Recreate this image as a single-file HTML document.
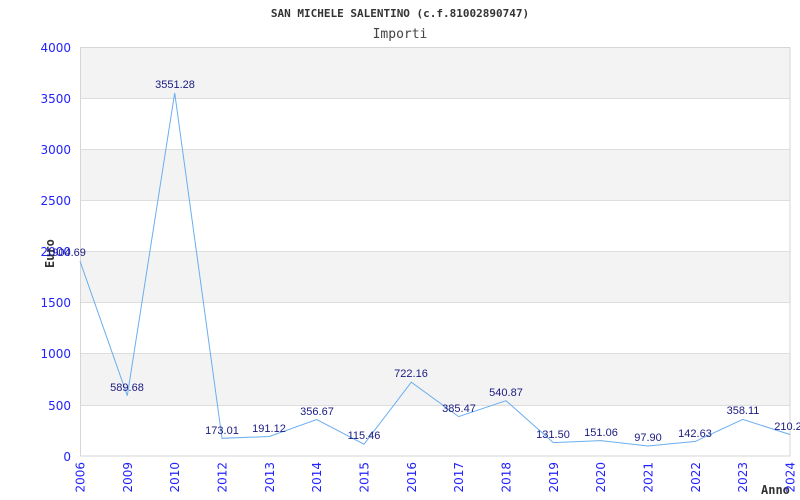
<!DOCTYPE html>
<html><head><meta charset="utf-8"><style>
html,body{margin:0;padding:0;background:#fff;width:800px;height:500px;overflow:hidden}
svg text{font-family:"DejaVu Sans","Liberation Sans",sans-serif}
svg text.v{font-family:"Liberation Sans",Arial,sans-serif}
svg text.m{font-family:"DejaVu Sans Mono","Liberation Mono",monospace}
</style></head><body>
<svg width="800" height="500" viewBox="0 0 800 500" xmlns="http://www.w3.org/2000/svg">
<rect x="80" y="47" width="710" height="51" fill="#f3f3f3"/>
<rect x="80" y="149" width="710" height="51" fill="#f3f3f3"/>
<rect x="80" y="251" width="710" height="51" fill="#f3f3f3"/>
<rect x="80" y="353" width="710" height="52" fill="#f3f3f3"/>
<g stroke="#dddddd" stroke-width="1">
<line x1="80" y1="98.5" x2="790" y2="98.5"/>
<line x1="80" y1="149.5" x2="790" y2="149.5"/>
<line x1="80" y1="200.5" x2="790" y2="200.5"/>
<line x1="80" y1="251.5" x2="790" y2="251.5"/>
<line x1="80" y1="302.5" x2="790" y2="302.5"/>
<line x1="80" y1="353.5" x2="790" y2="353.5"/>
<line x1="80" y1="405.5" x2="790" y2="405.5"/>
</g>
<rect x="80.5" y="47.5" width="709.5" height="408.5" fill="none" stroke="#d6d6d6"/>
<text class="m" x="400" y="17" text-anchor="middle" font-size="11" font-weight="bold" fill="#333">SAN MICHELE SALENTINO (c.f.81002890747)</text>
<text class="m" x="400" y="38" text-anchor="middle" font-size="13" fill="#444">Importi</text>
<g font-size="12" fill="#2222ff" text-anchor="end">
<text x="71" y="52">4000</text><text x="71" y="103">3500</text><text x="71" y="154">3000</text>
<text x="71" y="205">2500</text><text x="71" y="256">2000</text><text x="71" y="307">1500</text>
<text x="71" y="358">1000</text><text x="71" y="410">500</text><text x="71" y="461">0</text>
</g>
<text class="m" transform="translate(54,268) rotate(-90)" font-size="12" font-weight="bold" fill="#333">Euro</text>
<text class="m" x="761" y="494" font-size="12" font-weight="bold" fill="#333">Anno</text>
<polyline fill="none" stroke="#6aaef0" stroke-width="1" points="80,261.2 127.3,395.7 174.7,92.9 222,438.3 269.3,436.5 316.7,419.5 364,444.2 411.3,382.2 458.7,416.6 506,400.7 553.3,442.6 600.7,440.6 648,446 695.3,441.4 742.7,419.4 790,434.5"/>
<g font-size="11" fill="#1a1a80" text-anchor="middle">
<text class="v" x="66" y="256">1904.69</text>
<text class="v" x="127" y="391">589.68</text>
<text class="v" x="175" y="88">3551.28</text>
<text class="v" x="222" y="434">173.01</text>
<text class="v" x="269" y="432">191.12</text>
<text class="v" x="317" y="415">356.67</text>
<text class="v" x="364" y="439">115.46</text>
<text class="v" x="411" y="377">722.16</text>
<text class="v" x="459" y="412">385.47</text>
<text class="v" x="506" y="396">540.87</text>
<text class="v" x="553" y="438">131.50</text>
<text class="v" x="601" y="436">151.06</text>
<text class="v" x="648" y="441">97.90</text>
<text class="v" x="695" y="437">142.63</text>
<text class="v" x="743" y="414">358.11</text>
<text class="v" x="788" y="430">210.2</text>
</g>
<g font-size="12" fill="#2222ff" text-anchor="end">
<text transform="translate(84.5,462) rotate(-90)">2006</text>
<text transform="translate(131.8,462) rotate(-90)">2009</text>
<text transform="translate(179.2,462) rotate(-90)">2010</text>
<text transform="translate(226.5,462) rotate(-90)">2012</text>
<text transform="translate(273.8,462) rotate(-90)">2013</text>
<text transform="translate(321.2,462) rotate(-90)">2014</text>
<text transform="translate(368.5,462) rotate(-90)">2015</text>
<text transform="translate(415.8,462) rotate(-90)">2016</text>
<text transform="translate(463.2,462) rotate(-90)">2017</text>
<text transform="translate(510.5,462) rotate(-90)">2018</text>
<text transform="translate(557.8,462) rotate(-90)">2019</text>
<text transform="translate(605.2,462) rotate(-90)">2020</text>
<text transform="translate(652.5,462) rotate(-90)">2021</text>
<text transform="translate(699.8,462) rotate(-90)">2022</text>
<text transform="translate(747.2,462) rotate(-90)">2023</text>
<text transform="translate(794.5,462) rotate(-90)">2024</text>
</g>
</svg>
</body></html>
